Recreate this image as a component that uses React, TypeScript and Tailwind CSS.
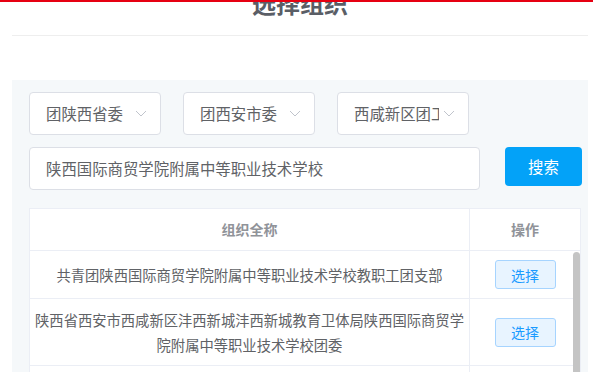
import React from "react";

const font = { fontFamily: '"Noto Sans CJK SC", "Noto Sans", sans-serif' };

function Chevron() {
  return (
    <svg className="w-[12px] h-[7px]" viewBox="0 0 12 7" fill="none">
      <path d="M1 1l5 5 5-5" stroke="#c0c4cc" strokeWidth="1" />
    </svg>
  );
}

function Select({ label }: { label: string }) {
  return (
    <div className="w-[132px] h-[43px] bg-white border border-[#dcdfe6] rounded-[4px] flex items-center pl-[16px] pr-[13px]">
      <div className="w-[85px] overflow-hidden whitespace-nowrap text-[15.4px] text-[#606266]">{label}</div>
      <div className="ml-auto flex items-center">
        <Chevron />
      </div>
    </div>
  );
}

function PickButton() {
  return (
    <button className="w-[61px] h-[29px] rounded-[3px] border border-[#a6d4ff] bg-[#e8f4ff] text-[#1a9bff] text-[14px] leading-none">
      选择
    </button>
  );
}

const rows = [
  { name: "共青团陕西国际商贸学院附属中等职业技术学校教职工团支部", h: "h-[48px]" },
  {
    name: "陕西省西安市西咸新区沣西新城沣西新城教育卫体局陕西国际商贸学院附属中等职业技术学校团委",
    h: "h-[67px]",
  },
  { name: "", h: "h-[48px]" },
];

export default function App() {
  return (
    <div className="relative w-[593px] h-[372px] overflow-hidden bg-white" style={font}>
      <div className="absolute top-0 left-0 right-0 h-[2px] bg-[#e60012] z-10" />

      <div className="ml-[12px] mr-[5px] border-b border-[#eeeeee] h-[36px] flex flex-col">
        <h2 className="-mt-[15px] text-center text-[24px] leading-[36px] font-bold text-[#5a5e66]">选择组织</h2>
      </div>

      <div className="mt-[44px] ml-[12px] mr-[5px] bg-[#f5f8fa] pt-[12px] pl-[17px] pr-[6px] h-[400px]">
        <div className="flex gap-[22px]">
          <Select label="团陕西省委" />
          <Select label="团西安市委" />
          <Select label="西咸新区团工委" />
        </div>

        <div className="mt-[12px] flex items-start">
          <div className="w-[451px] h-[43px] bg-white border border-[#dcdfe6] rounded-[4px] flex items-center pl-[16px] text-[15.4px] text-[#606266]">
            陕西国际商贸学院附属中等职业技术学校
          </div>
          <button className="ml-auto w-[77px] h-[39px] rounded-[4px] bg-[#03a2f8] text-white text-[15.4px]">
            搜索
          </button>
        </div>

        <div className="mt-[18px] w-[552px] bg-white border-l border-r border-t border-[#ebeef5]">
          <div className="flex h-[42px] border-b border-[#ebeef5] text-[14px] font-bold text-[#909399]">
            <div className="w-[440px] border-r border-[#ebeef5] flex items-center justify-center">组织全称</div>
            <div className="flex-1 flex items-center justify-center">操作</div>
          </div>
          <div className="relative">
            {rows.map((r, i) => (
              <div key={i} className={`flex ${r.h} border-b border-[#ebeef5]`}>
                <div className="w-[440px] border-r border-[#ebeef5] flex items-center justify-center px-[5px] text-center text-[14.3px] leading-[25px] text-[#606266]">
                  {r.name}
                </div>
                <div className="flex-1 flex items-center justify-center">{r.name && <PickButton />}</div>
              </div>
            ))}
            <div className="absolute right-0 top-[1px] bottom-0 w-[7px] rounded-t-[4px] bg-[#c4c4c4]" />
          </div>
        </div>
      </div>
    </div>
  );
}
